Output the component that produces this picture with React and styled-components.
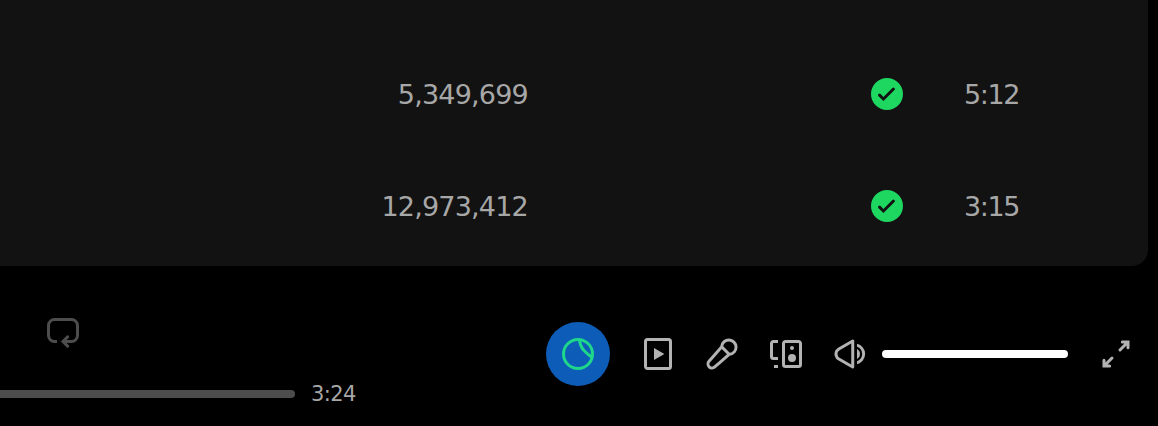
import styled, { createGlobalStyle } from "styled-components"

const GlobalStyle = createGlobalStyle`
    html, body {
        margin: 0;
        background: #000;
        overflow: hidden;
    }
    body {
        font-family: "DejaVu Sans", sans-serif;
    }
`

const Page = styled.div`
    width: 1158px;
    height: 426px;
    background: #000;
    display: flex;
    flex-direction: column;
`

const Panel = styled.div`
    width: 1148px;
    height: 266px;
    box-sizing: border-box;
    padding-top: 38px;
    background: #121212;
    border-radius: 0 0 16px 0;
`

const Row = styled.div`
    height: 112px;
    display: grid;
    grid-template-columns: 528px 375px 116px;
    align-items: center;
`

const Cell = styled.div`
    text-align: right;
    font-size: 27px;
    letter-spacing: ${(p) => (p.$tight ? -1.4 : -0.8)}px;
    color: #a7a7a7;
`

const CheckCell = styled.div`
    display: flex;
    justify-content: flex-end;
    color: #1ed760;
`

const Bar = styled.div`
    flex: 1;
    display: flex;
`

const Left = styled.div`
    width: 546px;
    display: flex;
    flex-direction: column;
`

const RepeatWrap = styled.div`
    padding: 50px 0 0 47px;
    height: 32px;
    color: #4d4d4d;
`

const Progress = styled.div`
    margin-top: 34px;
    display: flex;
    align-items: center;
    gap: 16px;
`

const Track = styled.div`
    width: 295px;
    height: 8px;
    background: #4d4d4d;
    border-radius: 0 4px 4px 0;
`

const Time = styled.span`
    font-size: 21px;
    letter-spacing: -0.6px;
    color: #a7a7a7;
`

const Right = styled.div`
    height: 64px;
    margin-top: 56px;
    display: flex;
    align-items: center;
`

const Badge = styled.div`
    width: 64px;
    height: 64px;
    border-radius: 50%;
    background: #0d5cb8;
    display: flex;
    align-items: center;
    justify-content: center;
    margin-right: 32px;
`

const IconButton = styled.div`
    width: 32px;
    height: 32px;
    margin-right: ${(p) => p.$gap}px;
    color: #b3b3b3;
`

const Volume = styled.div`
    width: 186px;
    height: 8px;
    border-radius: 4px;
    background: #fff;
    margin-right: 32px;
`

const Icon = ({ d, size = 32 }) => (
    <svg width={size} height={size} viewBox="0 0 16 16" fill="currentColor" style={{ display: "block" }}>
        <path d={d} />
    </svg>
)

const CHECK = "M0 8a8 8 0 1 1 16 0A8 8 0 0 1 0 8zm11.748-1.97a.75.75 0 0 0-1.06-1.06l-4.47 4.47-1.405-1.406a.75.75 0 1 0-1.061 1.06l2.466 2.467 5.53-5.53z"
const REPEAT = "M0 4.75A3.75 3.75 0 0 1 3.75 1h8.5A3.75 3.75 0 0 1 16 4.75v5a3.75 3.75 0 0 1-3.75 3.75H9.81l1.018 1.018a.75.75 0 1 1-1.06 1.06L6.939 12.75l2.829-2.828a.75.75 0 1 1 1.06 1.06L9.811 12h2.439a2.25 2.25 0 0 0 2.25-2.25v-5a2.25 2.25 0 0 0-2.25-2.25h-8.5A2.25 2.25 0 0 0 1.5 4.75v5A2.25 2.25 0 0 0 3.75 12H5v1.5H3.75A3.75 3.75 0 0 1 0 9.75v-5z"
const NOW_PLAYING = "M11.196 8 6 5v6zM15.002 1.75A1.75 1.75 0 0 0 13.252 0h-10.5a1.75 1.75 0 0 0-1.75 1.75v12.5c0 .966.783 1.75 1.75 1.75h10.5a1.75 1.75 0 0 0 1.75-1.75V1.75zm-1.75-.25a.25.25 0 0 1 .25.25v12.5a.25.25 0 0 1-.25.25h-10.5a.25.25 0 0 1-.25-.25V1.75a.25.25 0 0 1 .25-.25h10.5z"
const MIC = "M13.426 2.574a2.831 2.831 0 0 0-4.797 1.55l3.247 3.247a2.831 2.831 0 0 0 1.55-4.797zM10.5 8.118l-2.619-2.62L4.74 9.075 2.065 12.12a1.287 1.287 0 0 0 1.816 1.816l3.06-2.688 3.56-3.129zM7.12 4.094a4.331 4.331 0 1 1 4.786 4.786l-3.974 3.493-3.06 2.689a2.787 2.787 0 0 1-3.933-3.933l2.676-3.045 3.505-3.99z"
const DEVICE = "M6 2.75C6 1.784 6.784 1 7.75 1h6.5c.966 0 1.75.784 1.75 1.75v10.5A1.75 1.75 0 0 1 14.25 15h-6.5A1.75 1.75 0 0 1 6 13.25V2.75zm1.75-.25a.25.25 0 0 0-.25.25v10.5c0 .138.112.25.25.25h6.5a.25.25 0 0 0 .25-.25V2.75a.25.25 0 0 0-.25-.25h-6.5zm-6 0a.25.25 0 0 0-.25.25v6.5c0 .138.112.25.25.25H4V11H1.75A1.75 1.75 0 0 1 0 9.25v-6.5C0 1.784.784 1 1.75 1H4v1.5H1.75zM4 15H2v-1.5h2V15zM13 10a2 2 0 1 1-4 0 2 2 0 0 1 4 0zm-1-5a1 1 0 1 1-2 0 1 1 0 0 1 2 0z"
const SPEAKER = "M9.741.85a.75.75 0 0 1 .375.65v13a.75.75 0 0 1-1.125.65l-6.925-4a3.642 3.642 0 0 1-1.33-4.967 3.639 3.639 0 0 1 1.33-1.332l6.925-4a.75.75 0 0 1 .75 0zm-6.924 5.3a2.139 2.139 0 0 0 0 3.7l5.8 3.35V2.8l-5.8 3.35zM11.5 13.114a5.25 5.25 0 0 0 0-10.228v1.55a3.75 3.75 0 0 1 0 7.128v1.55zM11.5 5.56v4.88a2.75 2.75 0 0 0 0-4.88z"
const EXPAND = "M6.53 9.47a.75.75 0 0 1 0 1.06l-2.72 2.72h1.018a.75.75 0 0 1 0 1.5H1.25v-3.579a.75.75 0 0 1 1.5 0v1.018l2.72-2.72a.75.75 0 0 1 1.06 0zm2.94-2.94a.75.75 0 0 1 0-1.06l2.72-2.72h-1.018a.75.75 0 1 1 0-1.5h3.578v3.579a.75.75 0 0 1-1.5 0V3.81l-2.72 2.72a.75.75 0 0 1-1.06 0z"

const tracks = [
    { plays: "5,349,699", length: "5:12" },
    { plays: "12,973,412", length: "3:15" },
]

function BadgeIcon() {
    return (
        <svg width="34" height="34" viewBox="0 0 34 34" fill="none" stroke="#1ed78a" strokeWidth="3" style={{ display: "block" }}>
            <circle cx="17" cy="17" r="14.5" />
            <path d="M18.5 3c.5 5 2 8 5 11 2.5 2.5 4 4 7 6" />
        </svg>
    )
}

export default function App() {
    return (
        <Page>
            <GlobalStyle />
            <Panel>
                {tracks.map((t) => (
                    <Row key={t.plays}>
                        <Cell>{t.plays}</Cell>
                        <CheckCell>
                            <Icon d={CHECK} />
                        </CheckCell>
                        <Cell $tight>{t.length}</Cell>
                    </Row>
                ))}
            </Panel>
            <Bar>
                <Left>
                    <RepeatWrap>
                        <Icon d={REPEAT} />
                    </RepeatWrap>
                    <Progress>
                        <Track />
                        <Time>3:24</Time>
                    </Progress>
                </Left>
                <Right>
                    <Badge>
                        <BadgeIcon />
                    </Badge>
                    <IconButton $gap={32}><Icon d={NOW_PLAYING} /></IconButton>
                    <IconButton $gap={32}><Icon d={MIC} /></IconButton>
                    <IconButton $gap={32}><Icon d={DEVICE} /></IconButton>
                    <IconButton $gap={16}><Icon d={SPEAKER} /></IconButton>
                    <Volume />
                    <IconButton $gap={0}><Icon d={EXPAND} /></IconButton>
                </Right>
            </Bar>
        </Page>
    )
}
